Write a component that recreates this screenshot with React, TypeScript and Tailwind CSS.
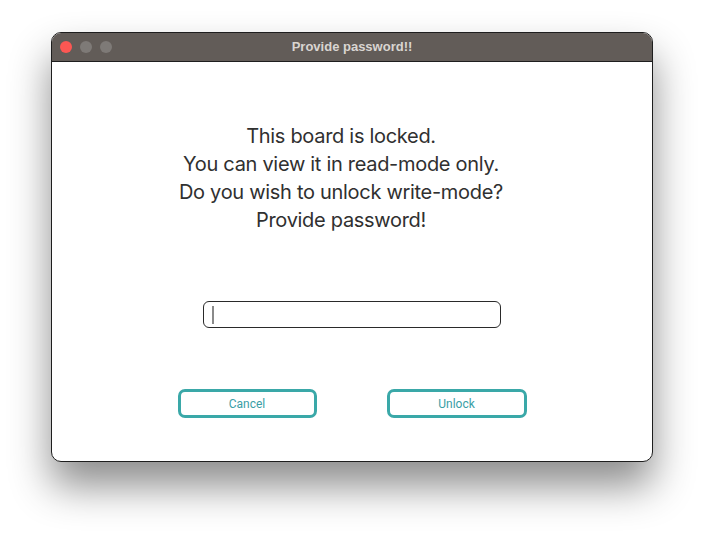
export default function App() {
    return (
        <div className="w-[708px] h-[535px] bg-white pt-[32px] pl-[51px] font-['Inter',sans-serif]">
            {/* Window */}
            <div className="w-[602px] h-[430px] rounded-[10px] border border-[#1e1e1e] bg-white overflow-hidden shadow-[0_24px_40px_rgba(0,0,0,0.45)] flex flex-col">
                {/* Title bar */}
                <div className="h-[29px] bg-[#625c58] border-b border-[#1e1e1e] flex items-center relative">
                    <div className="flex items-center gap-[8px] pl-[8px]">
                        <span className="w-[12px] h-[12px] rounded-full bg-[#fc5753]"></span>
                        <span className="w-[12px] h-[12px] rounded-full bg-[#7e7a77]"></span>
                        <span className="w-[12px] h-[12px] rounded-full bg-[#7e7a77]"></span>
                    </div>
                    <div className="absolute inset-0 flex items-center justify-center text-[13px] font-bold text-[#d9d5d1] font-['Liberation_Sans',sans-serif]">
                        Provide password!!
                    </div>
                </div>

                {/* Content */}
                <div className="flex-1 flex flex-col items-center pt-[60px]">
                    <div className="text-[20px] leading-[28px] text-[#303030] text-center pr-[22px] tracking-[-0.3px]">
                        <p>This board is locked.</p>
                        <p>You can view it in read-mode only.</p>
                        <p>Do you wish to unlock write-mode?</p>
                        <p>Provide password!</p>
                    </div>

                    <div className="mt-[67px] w-[298px] h-[27px] rounded-[6px] border border-[#2a2a2a] flex items-center pl-[8px]">
                        <span className="w-[2px] h-[18px] bg-[#8a8a8a]"></span>
                    </div>

                    <div className="mt-[61px] flex gap-[70px]">
                        <button className="w-[139px] h-[29px] rounded-[7px] border-[3px] border-[#3aa8a8] text-[12px] text-[#3a9ea6] font-['Roboto',sans-serif]">
                            Cancel
                        </button>
                        <button className="w-[140px] h-[29px] rounded-[7px] border-[3px] border-[#3aa8a8] text-[12px] text-[#3a9ea6] font-['Roboto',sans-serif]">
                            Unlock
                        </button>
                    </div>
                </div>
            </div>
        </div>
    );
}
